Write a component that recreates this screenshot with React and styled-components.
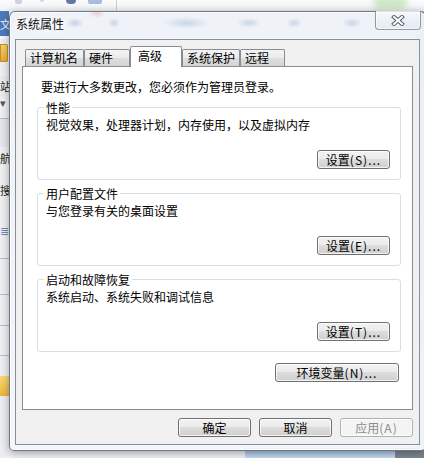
import React from "react";
import styled, { createGlobalStyle } from "styled-components";

const GlobalStyle = createGlobalStyle`
    html, body {
        margin: 0;
        padding: 0;
    }
    body {
        font-family: "Noto Sans CJK SC", "Noto Sans", sans-serif;
        font-size: 12px;
        color: #000;
    }
`;

const Screen = styled.div`
    position: relative;
    width: 424px;
    height: 458px;
    overflow: hidden;
    background: #f2f3f5;
`;

/* the windows behind the dialog */
const Desktop = styled.div`
    display: grid;
    grid-template-rows: 11px 1fr;
    grid-template-columns: 9px 1fr;
    height: 100%;
`;

const TopBar = styled.div`
    grid-column: 1 / 3;
    display: flex;
    align-items: flex-start;
    gap: 10px;
    padding-left: 15px;
    background: linear-gradient(#fbfcfd, #eef1f4);
    overflow: hidden;
`;

const ToolIcon = styled.span`
    width: ${(p) => p.$w}px;
    height: ${(p) => p.$h}px;
    margin-top: -4px;
    margin-left: ${(p) => p.$ml || 0}px;
    border-radius: ${(p) => p.$r || 2}px;
    background: ${(p) => p.$bg};
    opacity: ${(p) => p.$o || 0.8};
    filter: blur(${(p) => p.$blur || 0}px);
`;

const ToolSep = styled.span`
    width: 1px;
    height: 11px;
    margin-left: ${(p) => p.$ml}px;
    background: #c9ced4;
`;

const SideStrip = styled.div`
    display: flex;
    flex-direction: column;
    overflow: hidden;
    background: #eef0f3;
`;

const SideCell = styled.div`
    height: ${(p) => p.$h}px;
    flex: none;
    display: flex;
    align-items: center;
    background: ${(p) => p.$bg || "transparent"};
    color: ${(p) => p.$fg || "#222"};
    font-size: 11px;
    line-height: 14px;
    white-space: nowrap;
    border-bottom: ${(p) => (p.$line ? "1px solid #b8bec5" : "none")};
    box-sizing: border-box;
`;

const Folder = styled.span`
    width: 8px;
    height: 18px;
    border-radius: 0 2px 2px 0;
    background: linear-gradient(#f6d66b, #e3a936);
    box-shadow: inset 0 0 0 1px #c98f25;
`;

const Backdrop = styled.div`
    display: flex;
    flex-direction: column;
    background: linear-gradient(to right, #f4f5f7 0, #f4f5f7 calc(100% - 12px), #a9c7ea 100%);
`;

const BackdropFill = styled.div`
    flex: 1;
`;

const BottomBand = styled.div`
    height: 10px;
    display: flex;
`;

const BandPart = styled.div`
    flex: ${(p) => (p.$w ? "none" : 1)};
    width: ${(p) => (p.$w ? `${p.$w}px` : "auto")};
    background: ${(p) => p.$bg};
`;

/* dialog */
const Dialog = styled.div`
    position: absolute;
    left: 9px;
    top: 11px;
    width: 417px;
    height: 440px;
    box-sizing: border-box;
    display: flex;
    flex-direction: column;
    padding: 0 5px 5px 5px;
    border: 1px solid rgba(62, 70, 80, 0.72);
    border-radius: 6px 6px 5px 5px;
    background: linear-gradient(rgba(238, 242, 247, 0.9), rgba(242, 245, 249, 0.92));
    box-shadow: inset 0 0 0 1px rgba(255, 255, 255, 0.8), 0 2px 9px rgba(0, 0, 0, 0.35);
`;

const Caption = styled.div`
    height: 27px;
    flex: none;
    display: flex;
    align-items: flex-start;
    justify-content: space-between;
    background:
        radial-gradient(ellipse 9px 5px at 60px 11px, rgba(115, 145, 190, 0.35), transparent),
        radial-gradient(ellipse 6px 5px at 99px 11px, rgba(115, 145, 190, 0.3), transparent),
        radial-gradient(ellipse 24px 6px at 171px 11px, rgba(115, 145, 190, 0.3), transparent),
        radial-gradient(ellipse 12px 5px at 234px 11px, rgba(115, 145, 190, 0.3), transparent),
        radial-gradient(ellipse 8px 5px at 279px 11px, rgba(115, 145, 190, 0.3), transparent),
        radial-gradient(ellipse 10px 5px at 337px 11px, rgba(115, 145, 190, 0.3), transparent),
        radial-gradient(ellipse 9px 6px at 82px 0px, rgba(225, 120, 130, 0.35), transparent);
`;

const Title = styled.div`
    margin: 5px 0 0 1px;
    font-size: 12px;
    line-height: 14px;
    color: #111;
    text-shadow: 0 0 5px #fff, 0 0 9px #fff, 0 0 12px #fff;
`;

const CloseButton = styled.div`
    width: 46px;
    height: 19px;
    margin: -1px -1px 0 0;
    box-sizing: border-box;
    display: flex;
    align-items: center;
    justify-content: center;
    border: 1px solid rgba(70, 78, 90, 0.55);
    border-top: none;
    border-radius: 0 0 4px 4px;
    background: linear-gradient(rgba(255, 255, 255, 0.45), rgba(214, 224, 236, 0.4));
    box-shadow: inset 0 0 0 1px rgba(255, 255, 255, 0.6);
`;

const Client = styled.div`
    flex: 1;
    display: flex;
    flex-direction: column;
    padding: 6px 6px 7px 6px;
    border: 1px solid #87909a;
    background: #f0f0f0;
`;

const TabRow = styled.div`
    height: 20px;
    display: flex;
    align-items: flex-end;
    padding-left: 3px;
    position: relative;
    z-index: 1;
`;

const Tab = styled.div`
    width: ${(p) => p.$w}px;
    height: ${(p) => (p.$active ? 21 : 17)}px;
    margin-bottom: ${(p) => (p.$active ? -1 : 0)}px;
    box-sizing: border-box;
    padding: ${(p) => (p.$active ? "2px 0 0 7px" : "0 0 0 4px")};
    border: 1px solid #898c95;
    border-bottom: none;
    border-radius: 2px 2px 0 0;
    background: ${(p) =>
        p.$active
            ? "#fff"
            : "linear-gradient(#f3f3f3 0%, #ebebeb 50%, #dedede 51%, #d4d4d4 100%)"};
    font-size: 12px;
    line-height: ${(p) => (p.$active ? 14 : 16)}px;
    white-space: nowrap;
`;

const Panel = styled.div`
    height: 344px;
    box-sizing: border-box;
    display: flex;
    flex-direction: column;
    padding: 13px 11px 0 14px;
    border: 1px solid #898c95;
    background: #fff;
`;

const Intro = styled.div`
    margin-left: 4px;
    line-height: 14px;
`;

const Group = styled.fieldset`
    margin: ${(p) => p.$top}px 0 0 0;
    min-width: 0;
    padding: 0 10px 10px 8px;
    border: 1px solid #d5dfe5;
    border-radius: 3px;
`;

const GroupLabel = styled.legend`
    margin-left: -2px;
    padding: 0 2px;
    font-size: 12px;
    line-height: 13px;
`;

const GroupText = styled.div`
    margin-top: 4px;
    line-height: 14px;
`;

const ButtonRow = styled.div`
    display: flex;
    justify-content: flex-end;
    gap: 8px;
    margin-top: ${(p) => p.$top || 0}px;
    margin-right: ${(p) => p.$right || 0}px;
`;

const Button = styled.button`
    width: ${(p) => p.$w}px;
    height: 19px;
    padding: 0;
    box-sizing: border-box;
    border: 1px solid ${(p) => (p.disabled ? "#adb2b5" : "#707070")};
    border-radius: 3px;
    background: ${(p) =>
        p.disabled
            ? "#f4f4f4"
            : "linear-gradient(#f2f2f2 0%, #ebebeb 49%, #dddddd 50%, #cfcfcf 100%)"};
    box-shadow: inset 0 0 0 1px rgba(255, 255, 255, 0.75);
    font-family: inherit;
    font-size: 12px;
    line-height: 16px;
    color: ${(p) => (p.disabled ? "#8c8c8c" : "#000")};
    white-space: nowrap;
`;

const Key = styled.span`
    letter-spacing: 1px;
`;

const Footer = styled.div`
    display: flex;
    justify-content: flex-end;
    gap: 8px;
    margin-top: 8px;
`;

const CloseGlyph = () => (
    <svg width="14" height="11" viewBox="0 0 14 11">
        <path d="M3 2 L11 9 M11 2 L3 9" stroke="#59606a" strokeWidth="4" strokeLinecap="square" />
        <path d="M3 2 L11 9 M11 2 L3 9" stroke="#fff" strokeWidth="2" strokeLinecap="square" />
    </svg>
);

const tabs = [
    { label: "计算机名", w: 59 },
    { label: "硬件", w: 46 },
    { label: "高级", w: 52, active: true },
    { label: "系统保护", w: 58 },
    { label: "远程", w: 45 },
];

const groups = [
    { title: "性能", text: "视觉效果，处理器计划，内存使用，以及虚拟内存", key: "S" },
    { title: "用户配置文件", text: "与您登录有关的桌面设置", key: "E" },
    { title: "启动和故障恢复", text: "系统启动、系统失败和调试信息", key: "T" },
];

const App = () => {
    return (
        <Screen>
            <GlobalStyle />
            <Desktop>
                <TopBar>
                    <ToolIcon $w={7} $h={8} $bg="#a9bbd2" $o={0.6} />
                    <ToolIcon $w={4} $h={6} $bg="#b4bfcb" $ml={8} $o={0.6} />
                    <ToolIcon $w={10} $h={8} $r={6} $bg="#3a5a92" $ml={12} />
                    <ToolIcon $w={14} $h={8} $bg="#86a4d1" $ml={2} $o={0.7} />
                    <ToolSep $ml={4} />
                    <ToolIcon $w={34} $h={14} $r={8} $bg="#c3e2b8" $ml={246} $blur={3} />
                </TopBar>
                <SideStrip>
                    <SideCell $h={25} $bg="#4b7bbd" $fg="#fff">文</SideCell>
                    <SideCell $h={3} $bg="#f6f7f8" />
                    <SideCell $h={28} $bg="#eef1f4">
                        <Folder />
                    </SideCell>
                    <SideCell $h={9} />
                    <SideCell $h={20} $bg="#e9ebee">站</SideCell>
                    <SideCell $h={12} $fg="#555">▾</SideCell>
                    <SideCell $h={11} $line />
                    <SideCell $h={28} $bg="#e4e6ea" />
                    <SideCell $h={22} $bg="#edf0f4">航</SideCell>
                    <SideCell $h={10} />
                    <SideCell $h={22}>搜</SideCell>
                    <SideCell $h={22} />
                    <SideCell $h={14} $fg="#6c8bb5">≣</SideCell>
                    <SideCell $h={22} $line />
                    <SideCell $h={36} $line />
                    <SideCell $h={31} $line />
                    <SideCell $h={30} $line />
                    <SideCell $h={20} />
                    <SideCell $h={20} $bg="linear-gradient(#fbd874, #f0b63c)" />
                    <SideCell $h={60} $bg="#eceef1" />
                </SideStrip>
                <Backdrop>
                    <BackdropFill />
                    <BottomBand>
                        <BandPart $w={236} $bg="#eff1f4" />
                        <BandPart $w={150} $bg="linear-gradient(#9fbde3, #c9dbf1)" />
                        <BandPart $bg="#7d8792" />
                    </BottomBand>
                </Backdrop>
            </Desktop>

            <Dialog>
                <Caption>
                    <Title>系统属性</Title>
                    <CloseButton>
                        <CloseGlyph />
                    </CloseButton>
                </Caption>
                <Client>
                    <TabRow>
                        {tabs.map((t) => (
                            <Tab key={t.label} $w={t.w} $active={t.active}>
                                {t.label}
                            </Tab>
                        ))}
                    </TabRow>
                    <Panel>
                        <Intro>要进行大多数更改，您必须作为管理员登录。</Intro>
                        {groups.map((g) => (
                            <Group key={g.title} $top={7}>
                                <GroupLabel>{g.title}</GroupLabel>
                                <GroupText>{g.text}</GroupText>
                                <ButtonRow $top={18}>
                                    <Button $w={73}>
                                        设置<Key>({g.key})...</Key>
                                    </Button>
                                </ButtonRow>
                            </Group>
                        ))}
                        <ButtonRow $top={11} $right={2}>
                            <Button $w={124}>
                                环境变量<Key>(N)...</Key>
                            </Button>
                        </ButtonRow>
                    </Panel>
                    <Footer>
                        <Button $w={73}>确定</Button>
                        <Button $w={73}>取消</Button>
                        <Button $w={73} disabled>
                            应用<Key>(A)</Key>
                        </Button>
                    </Footer>
                </Client>
            </Dialog>
        </Screen>
    );
};

export default App;
